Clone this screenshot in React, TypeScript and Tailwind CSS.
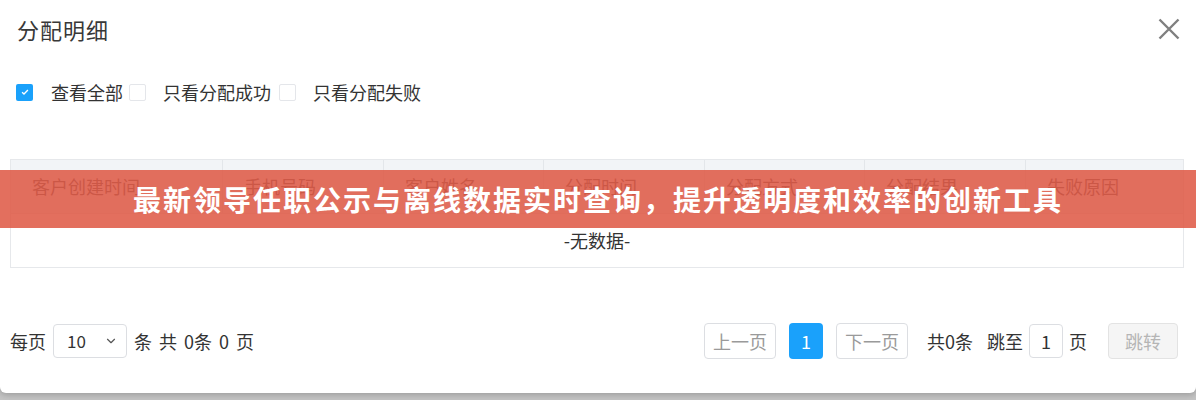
import React from 'react';
import { ChevronDown } from 'lucide-react';

const columns = [
  { label: '客户创建时间', w: 'w-[212px]' },
  { label: '手机号码', w: 'w-[161px]' },
  { label: '客户姓名', w: 'w-[160px]' },
  { label: '分配时间', w: 'w-[161px]' },
  { label: '分配方式', w: 'w-[160px]' },
  { label: '分配结果', w: 'w-[161px]' },
  { label: '失败原因', w: 'flex-1' },
];

const Check = ({ checked }: { checked?: boolean }) =>
  checked ? (
    <span className="flex h-[17px] w-[17px] shrink-0 items-center justify-center rounded-[2px] bg-[#1aa1fb]">
      <svg viewBox="0 0 12 12" className="h-[10px] w-[10px]">
        <path d="M2.5 6.2l2.3 2.2 4.7-4.8" fill="none" stroke="#fff" strokeWidth="1.6" />
      </svg>
    </span>
  ) : (
    <span className="block h-[17px] w-[17px] shrink-0 rounded-[2px] border border-[#e4e6ea] bg-white" />
  );

export default function App() {
  return (
    <div
      className="relative h-[400px] w-[1196px] overflow-hidden bg-[#c4c4c4] text-[#333]"
      style={{ fontFamily: '"Noto Sans CJK SC", "Noto Sans", sans-serif' }}
    >
      <div className="h-[393px] rounded-b-[6px] bg-white shadow-[0_2px_6px_rgba(0,0,0,0.2)]">
        {/* header */}
        <div className="flex h-[60px] items-start justify-between pl-[17px] pr-[16px] pt-[14px]">
          <span className="text-[22px] leading-[30px] tracking-[1px] text-[#383838]">分配明细</span>
          <svg viewBox="0 0 22 22" className="mt-[4px] h-[22px] w-[22px]">
            <path d="M1.5 1.5l19 19M20.5 1.5l-19 19" stroke="#7f7f7f" strokeWidth="2.4" />
          </svg>
        </div>

        {/* filters */}
        <div className="mt-[22px] flex h-[20px] items-center pl-[16px] text-[18px]">
          <Check checked />
          <span className="ml-[18px]">查看全部</span>
          <span className="ml-[6px] flex"><Check /></span>
          <span className="ml-[17px]">只看分配成功</span>
          <span className="ml-[8px] flex"><Check /></span>
          <span className="ml-[17px]">只看分配失败</span>
        </div>

        {/* table */}
        <div className="mx-[10px] mt-[57px] w-[1174px] border border-[#e6e8eb] text-[18px]">
          <div className="flex h-[53px] bg-[#f2f4f7] text-[#555]">
            {columns.map((c, i) => (
              <div
                key={c.label}
                className={`${c.w} flex items-center pl-[21px] ${i < columns.length - 1 ? 'border-r border-[#e3e6ea]' : ''}`}
              >
                {c.label}
              </div>
            ))}
          </div>
          <div className="flex h-[54px] items-center justify-center border-t border-[#e6e8eb]">-无数据-</div>
        </div>

        {/* pagination */}
        <div className="mt-[55px] flex items-center pl-[10px] pr-[18px] text-[18px]">
          <span>每页</span>
          <div className="ml-[7px] flex h-[34px] w-[74px] items-center justify-between rounded-[4px] border border-[#dcdee2] pl-[13px] pr-[8px]">
            <span className="text-[17px]">10</span>
            <ChevronDown className="h-[14px] w-[14px] text-[#555]" strokeWidth={2} />
          </div>
          <span className="ml-[7px] [word-spacing:3px]">条 共 0条 0 页</span>

          <div className="ml-auto flex items-center">
            <span className="flex h-[36px] w-[72px] items-center justify-center rounded-[4px] border border-[#dcdee2] text-[#9a9a9a]">上一页</span>
            <span className="ml-[13px] flex h-[36px] w-[34px] items-center justify-center rounded-[4px] bg-[#1aa1fb] text-white">1</span>
            <span className="ml-[13px] flex h-[36px] w-[72px] items-center justify-center rounded-[4px] border border-[#dcdee2] text-[#9a9a9a]">下一页</span>
            <span className="ml-[19px]">共0条</span>
            <span className="ml-[14px]">跳至</span>
            <span className="ml-[6px] flex h-[34px] w-[34px] items-center justify-center rounded-[4px] border border-[#dcdee2]">1</span>
            <span className="ml-[6px]">页</span>
            <span className="ml-[21px] flex h-[36px] w-[70px] items-center justify-center rounded-[4px] border border-[#e3e3e3] bg-[#f5f5f5] text-[#b5b5b5]">跳转</span>
          </div>
        </div>
      </div>

      {/* banner overlay */}
      <div className="absolute left-0 top-[170px] flex h-[58px] w-full items-center justify-center bg-[rgba(222,87,68,0.86)]">
        <span className="text-[28px] font-bold tracking-[2px] text-white">
          最新领导任职公示与离线数据实时查询，提升透明度和效率的创新工具
        </span>
      </div>
    </div>
  );
}
